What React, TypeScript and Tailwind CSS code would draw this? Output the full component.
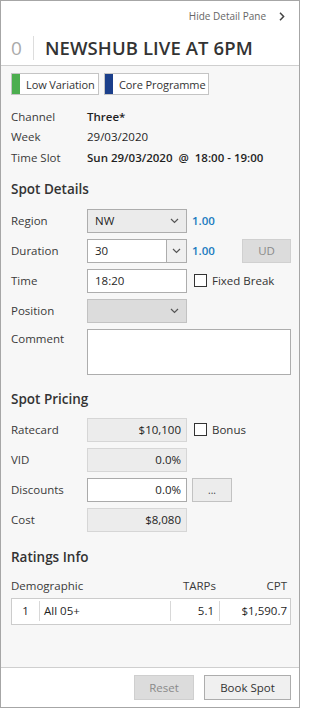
import React from "react";

const font = { fontFamily: '"Open Sans", "Noto Sans", sans-serif' };

function ChevronDown() {
  return (
    <svg width="9" height="6" viewBox="0 0 9 6" className="text-[#555]">
      <path d="M1 1 L4.5 4.5 L8 1" fill="none" stroke="currentColor" strokeWidth="1.2" />
    </svg>
  );
}

function Label({ children }: { children: React.ReactNode }) {
  return <div className="w-[76px] shrink-0 text-[#3a3a3a]">{children}</div>;
}

function Checkbox({ label }: { label: string }) {
  return (
    <label className="flex items-center ml-[7px] gap-[5px] text-[#333]">
      <span className="w-[13px] h-[13px] border border-[#333] bg-white" />
      {label}
    </label>
  );
}

function ReadOnly({ value, white }: { value: string; white?: boolean }) {
  return (
    <div
      className={`w-[100px] h-[24px] flex items-center justify-end pr-[5px] border ${
        white ? "bg-white border-[#aaa]" : "bg-[#ececec] border-[#d6d6d6]"
      } text-[#222]`}
    >
      {value}
    </div>
  );
}

function Tag({ color, label, width }: { color: string; label: string; width: string }) {
  return (
    <div className={`${width} h-[22px] flex items-stretch border border-[#c4c4c4] bg-white whitespace-nowrap`}>
      <span className={`w-[8px] shrink-0 ${color}`} />
      <span className="flex items-center pl-[6px] text-[11px] text-[#333] tracking-[-0.1px]">{label}</span>
    </div>
  );
}

export default function App() {
  return (
    <div
      style={font}
      className="w-[300px] h-[708px] border border-[#a6a6a6] flex flex-col text-[11.5px] leading-none text-[#1f1f1f] overflow-hidden"
    >
      {/* header */}
      <div className="h-[64px] bg-white shrink-0">
        <div className="h-[30px] flex items-center justify-end pr-[14px] gap-[13px] text-[10px] text-[#666]">
          <span>Hide Detail Pane</span>
          <svg width="6" height="9" viewBox="0 0 6 9">
            <path d="M1 0.8 L4.6 4.5 L1 8.2" fill="none" stroke="#444" strokeWidth="1.5" />
          </svg>
        </div>
        <div className="h-[34px] flex items-center pl-[10px]">
          <span className="text-[19px] text-[#aaa] w-[22px]">0</span>
          <span className="w-px h-[24px] bg-[#ddd]" />
          <span className="ml-[11px] text-[18.5px] font-semibold text-[#333] tracking-[0.1px]">
            NEWSHUB LIVE AT 6PM
          </span>
        </div>
      </div>

      {/* body */}
      <div className="flex-1 bg-[#f7f7f7] border-y border-[#cfcfcf] pl-[10px] pr-[8px] flex flex-col">
        <div className="flex gap-[5px] mt-[7px]">
          <Tag color="bg-[#4cae4f]" label="Low Variation" width="w-[88px]" />
          <Tag color="bg-[#1b3f8b]" label="Core Programme" width="w-[105px]" />
        </div>

        <div className="mt-[11px] flex flex-col">
          <div className="h-[20.5px] flex items-center">
            <Label>Channel</Label>
            <span className="font-semibold">Three*</span>
          </div>
          <div className="h-[20.5px] flex items-center">
            <Label>Week</Label>
            <span>29/03/2020</span>
          </div>
          <div className="h-[20.5px] flex items-center">
            <Label>Time Slot</Label>
            <span className="font-semibold">Sun 29/03/2020&nbsp; @&nbsp; 18:00 - 19:00</span>
          </div>
        </div>

        {/* Spot Details */}
        <div className="mt-[12px] h-[20px] flex items-center text-[13.5px] font-semibold text-[#333]">
          Spot Details
        </div>
        <div className="mt-[9px] flex flex-col gap-[6px]">
          <div className="h-[24px] flex items-center">
            <Label>Region</Label>
            <div className="w-[100px] h-[24px] border border-[#adadad] bg-[#ebebeb] flex items-center justify-between pl-[7px] pr-[7px]">
              <span>NW</span>
              <ChevronDown />
            </div>
            <span className="ml-[5px] font-semibold text-[#1c7cc0]">1.00</span>
          </div>
          <div className="h-[24px] flex items-center">
            <Label>Duration</Label>
            <div className="w-[100px] h-[24px] border border-[#adadad] bg-white flex items-stretch">
              <span className="flex-1 flex items-center pl-[7px]">30</span>
              <span className="w-[20px] border-l border-[#adadad] bg-[#f0f0f0] flex items-center justify-center">
                <ChevronDown />
              </span>
            </div>
            <span className="ml-[5px] font-semibold text-[#1c7cc0]">1.00</span>
            <button className="ml-auto w-[49px] h-[24px] bg-[#dcdcdc] border border-[#d0d0d0] text-[#8a8a8a]">
              UD
            </button>
          </div>
          <div className="h-[24px] flex items-center">
            <Label>Time</Label>
            <div className="w-[100px] h-[24px] border border-[#adadad] bg-white flex items-center pl-[7px]">
              18:20
            </div>
            <Checkbox label="Fixed Break" />
          </div>
          <div className="h-[24px] flex items-center">
            <Label>Position</Label>
            <div className="w-[100px] h-[24px] border border-[#c2c2c2] bg-[#dcdcdc] flex items-center justify-end pr-[7px]">
              <ChevronDown />
            </div>
          </div>
          <div className="h-[46px] flex items-start">
            <div className="pt-[4px]">
              <Label>Comment</Label>
            </div>
            <div className="flex-1 h-[46px] border border-[#adadad] bg-white" />
          </div>
        </div>

        {/* Spot Pricing */}
        <div className="mt-[15px] h-[20px] flex items-center text-[13.5px] font-semibold text-[#333]">
          Spot Pricing
        </div>
        <div className="mt-[8px] flex flex-col gap-[6px]">
          <div className="h-[24px] flex items-center">
            <Label>Ratecard</Label>
            <ReadOnly value="$10,100" />
            <Checkbox label="Bonus" />
          </div>
          <div className="h-[24px] flex items-center">
            <Label>VID</Label>
            <ReadOnly value="0.0%" />
          </div>
          <div className="h-[24px] flex items-center">
            <Label>Discounts</Label>
            <ReadOnly value="0.0%" white />
            <button className="ml-[5px] w-[40px] h-[24px] bg-[#ececec] border border-[#c2c2c2] text-[#444] text-[10px]">
              ...
            </button>
          </div>
          <div className="h-[24px] flex items-center">
            <Label>Cost</Label>
            <ReadOnly value="$8,080" />
          </div>
        </div>

        {/* Ratings Info */}
        <div className="mt-[16px] h-[20px] flex items-center text-[13.5px] font-semibold text-[#333]">
          Ratings Info
        </div>
        <div className="mt-[8px] h-[20px] flex items-center text-[#3a3a3a]">
          <span className="flex-1">Demographic</span>
          <span className="w-[60px] text-right pr-[5px]">TARPs</span>
          <span className="w-[70px] text-right pr-[4px]">CPT</span>
        </div>
        <div className="mt-[2px] h-[27px] border border-[#cccccc] bg-white flex items-center">
          <span className="w-[27px] text-center">1</span>
          <span className="w-px h-[20px] bg-[#d8d8d8]" />
          <span className="flex-1 pl-[4px]">All 05+</span>
          <span className="w-px h-[20px] bg-[#d8d8d8]" />
          <span className="w-[48px] text-right pr-[5px]">5.1</span>
          <span className="w-px h-[20px] bg-[#d8d8d8]" />
          <span className="w-[70px] text-right pr-[3px]">$1,590.7</span>
        </div>
      </div>

      {/* footer */}
      <div className="h-[39px] shrink-0 bg-white flex items-center justify-end pr-[8px] gap-[10px]">
        <button className="w-[60px] h-[25px] bg-[#dcdcdc] border border-[#cfcfcf] text-[#8a8a8a]">
          Reset
        </button>
        <button className="w-[87px] h-[25px] bg-[#f0f0f0] border border-[#adadad] text-[#333]">
          Book Spot
        </button>
      </div>
    </div>
  );
}
